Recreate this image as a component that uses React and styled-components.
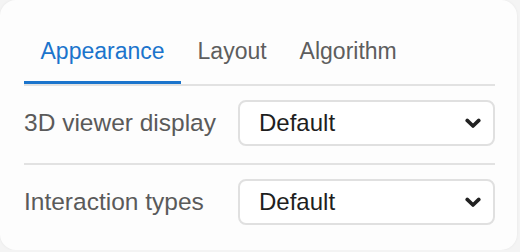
import React, { useState } from "react";
import styled, { createGlobalStyle } from "styled-components";

const GlobalStyle = createGlobalStyle`
  html, body {
    margin: 0;
    padding: 0;
    background: #f4f4f4;
    font-family: "Liberation Sans", Arial, sans-serif;
  }
`;

const tabs = ["Appearance", "Layout", "Algorithm"];

const settings = [
  { id: "viewer", label: "3D viewer display", value: "Default" },
  { id: "interaction", label: "Interaction types", value: "Default" },
];

const Chevron = () => (
  <svg width="16" height="11" viewBox="0 0 16 11">
    <path
      d="M2.2 2.4 L8 8 L13.8 2.4"
      fill="none"
      stroke="#222"
      strokeWidth="3.6"
      strokeLinecap="round"
      strokeLinejoin="round"
    />
  </svg>
);

const App = () => {
  const [activeTab, setActiveTab] = useState("Appearance");

  return (
    <>
      <GlobalStyle />
      <Card>
        <TabBar>
          {tabs.map((tab) => (
            <Tab key={tab} active={tab === activeTab} onClick={() => setActiveTab(tab)}>
              {tab}
            </Tab>
          ))}
        </TabBar>
        {settings.map((item, index) => (
          <Row key={item.id} last={index === settings.length - 1}>
            <Label>{item.label}</Label>
            <SelectBox type="button">
              <span>{item.value}</span>
              <Chevron />
            </SelectBox>
          </Row>
        ))}
      </Card>
    </>
  );
};

const Card = styled.div`
  box-sizing: border-box;
  width: 517px;
  height: 250px;
  padding: 24px 22px 0 24px;
  background: #fdfdfd;
  border-radius: 16px;
  box-shadow: 0 0 3px rgba(0, 0, 0, 0.06);
  overflow: hidden;
`;

const TabBar = styled.div`
  display: flex;
  border-bottom: 2px solid #e2e2e2;
`;

const Tab = styled.div`
  padding: 13px 16.5px 16px;
  font-size: 23px;
  line-height: 28px;
  color: ${(p) => (p.active ? "#1b74cc" : "#5e5e5e")};
  border-bottom: 3px solid ${(p) => (p.active ? "#1b74cc" : "transparent")};
  cursor: pointer;
`;

const Row = styled.div`
  display: grid;
  grid-template-columns: 214px 1fr;
  align-items: center;
  padding: 14px 0 17px;
  border-bottom: ${(p) => (p.last ? "none" : "2px solid #e2e2e2")};
`;

const Label = styled.div`
  font-size: 24.5px;
  line-height: 28px;
  color: #5a5a5a;
`;

const SelectBox = styled.button`
  box-sizing: border-box;
  display: flex;
  align-items: center;
  justify-content: space-between;
  height: 46px;
  padding: 0 12px 0 19px;
  background: #fff;
  border: 2px solid #e0e0e0;
  border-radius: 8px;
  font-family: "Liberation Sans", Arial, sans-serif;
  font-size: 24px;
  color: #1e1e1e;
  cursor: pointer;
`;

export default App;
